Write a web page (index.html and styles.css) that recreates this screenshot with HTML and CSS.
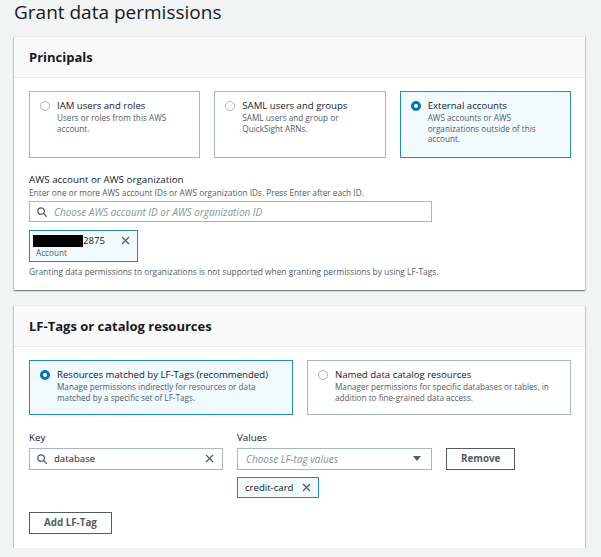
FILE: index.html
```html
<!DOCTYPE html>
<html lang="en">
<head>
<meta charset="utf-8">
<title>Grant data permissions</title>
<link rel="stylesheet" href="styles.css">
</head>
<body>
<div class="page">
  <h1 class="title">Grant data permissions</h1>

  <section class="panel panel-first">
    <header class="panel-head"><h2>Principals</h2></header>
    <div class="panel-body">
      <div class="tiles tiles-3">
        <div class="tile">
          <span class="radio"></span>
          <span class="tile-text">
            <span class="tile-title">IAM users and roles</span>
            <span class="tile-desc">Users or roles from this AWS account.</span>
          </span>
        </div>
        <div class="tile">
          <span class="radio"></span>
          <span class="tile-text">
            <span class="tile-title">SAML users and groups</span>
            <span class="tile-desc">SAML users and group or QuickSight ARNs.</span>
          </span>
        </div>
        <div class="tile selected">
          <span class="radio on"></span>
          <span class="tile-text">
            <span class="tile-title">External accounts</span>
            <span class="tile-desc">AWS accounts or AWS organizations outside of this account.</span>
          </span>
        </div>
      </div>

      <div class="field">
        <div class="field-label">AWS account or AWS organization</div>
        <div class="field-desc">Enter one or more AWS account IDs or AWS organization IDs. Press Enter after each ID.</div>
        <div class="input input-account">
          <svg class="icon" width="10" height="10" viewBox="0 0 10 10"><circle cx="4.1" cy="4.1" r="3.3" fill="none" stroke="#545b64" stroke-width="1.2"/><line x1="6.5" y1="6.5" x2="9.4" y2="9.4" stroke="#545b64" stroke-width="1.3" stroke-linecap="round"/></svg>
          <span class="placeholder">Choose AWS account ID or AWS organization ID</span>
        </div>
        <div class="token token-account">
          <div class="token-row">
            <span class="token-value"><span class="redact"></span>2875</span>
            <svg class="icon" width="9" height="9" viewBox="0 0 9 9"><path d="M1 1L8 8M8 1L1 8" stroke="#545b64" stroke-width="1.2" fill="none"/></svg>
          </div>
          <div class="token-sub">Account</div>
        </div>
        <div class="note">Granting data permissions to organizations is not supported when granting permissions by using LF-Tags.</div>
      </div>
    </div>
  </section>

  <section class="panel panel-second">
    <header class="panel-head"><h2>LF-Tags or catalog resources</h2></header>
    <div class="panel-body">
      <div class="tiles tiles-2">
        <div class="tile selected">
          <span class="radio on"></span>
          <span class="tile-text">
            <span class="tile-title">Resources matched by LF-Tags (recommended)</span>
            <span class="tile-desc">Manage permissions indirectly for resources or data<br>matched by a specific set of LF-Tags.</span>
          </span>
        </div>
        <div class="tile">
          <span class="radio"></span>
          <span class="tile-text">
            <span class="tile-title">Named data catalog resources</span>
            <span class="tile-desc">Manager permissions for specific databases or tables, in<br>addition to fine-grained data access.</span>
          </span>
        </div>
      </div>

      <div class="tag-row">
        <div class="tag-col tag-key">
          <div class="field-label">Key</div>
          <div class="input input-tall">
            <svg class="icon" width="10" height="10" viewBox="0 0 10 10"><circle cx="4.1" cy="4.1" r="3.3" fill="none" stroke="#545b64" stroke-width="1.2"/><line x1="6.5" y1="6.5" x2="9.4" y2="9.4" stroke="#545b64" stroke-width="1.3" stroke-linecap="round"/></svg>
            <span class="value">database</span>
            <svg class="icon" width="9" height="9" viewBox="0 0 9 9"><path d="M1 1L8 8M8 1L1 8" stroke="#545b64" stroke-width="1.2" fill="none"/></svg>
          </div>
        </div>
        <div class="tag-col tag-values">
          <div class="field-label">Values</div>
          <div class="input input-tall input-select">
            <span class="placeholder">Choose LF-tag values</span>
            <svg class="icon" width="8" height="5" viewBox="0 0 8 5"><polygon points="0,0 8,0 4,5" fill="#545b64"/></svg>
          </div>
          <div class="token token-tag">
            <span>credit-card</span>
            <svg class="icon" width="9" height="9" viewBox="0 0 9 9"><path d="M1 1L8 8M8 1L1 8" stroke="#545b64" stroke-width="1.2" fill="none"/></svg>
          </div>
        </div>
        <div class="tag-col tag-action">
          <button class="btn" type="button">Remove</button>
        </div>
      </div>

      <button class="btn btn-add" type="button">Add LF-Tag</button>
    </div>
  </section>
</div>
</body>
</html>
```

FILE: styles.css
```css
html, body {
  margin: 0;
  padding: 0;
}

body {
  background: #f2f3f3;
  font-family: "Open Sans", "Liberation Sans", sans-serif;
  color: #16191f;
}

.page {
  padding: 0 16px 0 14px;
}

.title {
  margin: 0 0 12px 0;
  font-size: 19px;
  font-weight: 400;
  line-height: 24px;
  color: #16191f;
}

.panel {
  background: #fff;
  box-shadow: 0 1px 1px 0 rgba(0, 28, 36, 0.3), 1px 1px 1px 0 rgba(0, 28, 36, 0.15), -1px 1px 1px 0 rgba(0, 28, 36, 0.15);
  border-top: 1px solid #eaeded;
}

.panel-second {
  margin-top: 15px;
}

.panel-head {
  background: #fafafa;
  border-bottom: 1px solid #eaeded;
  padding: 12px 15px 11px;
}

.panel-head h2 {
  margin: 0;
  font-size: 13px;
  font-weight: 700;
  line-height: 17px;
}

.panel-body {
  padding: 13px 14px 14px 15px;
}

.panel-first .panel-body {
  padding-bottom: 13px;
}

.tiles {
  display: grid;
  gap: 14px;
}

.tiles-3 {
  grid-template-columns: repeat(3, 1fr);
}

.tiles-2 {
  grid-template-columns: repeat(2, 1fr);
}

.tile {
  display: flex;
  align-items: flex-start;
  gap: 7px;
  border: 1px solid #aab7b8;
  background: #fff;
  padding: 7px 6px 10px 10px;
}

.tiles-3 .tile {
  padding-bottom: 12px;
}

.tile.selected {
  border-color: #2590a9;
  background: #f1faff;
}

.radio {
  flex: none;
  box-sizing: border-box;
  width: 10px;
  height: 10px;
  margin-top: 2px;
  border: 1px solid #aab7b8;
  border-radius: 50%;
  background: #fff;
}

.radio.on {
  border: 3px solid #0073bb;
}

.tile-text {
  display: block;
  min-width: 0;
}

.tile-title {
  display: block;
  font-size: 9.6px;
  line-height: 14px;
}

.tile-desc {
  display: block;
  font-size: 8.2px;
  line-height: 10.7px;
  color: #545b64;
}

.field {
  margin-top: 15px;
}

.field-label {
  font-size: 9.8px;
  line-height: 14px;
}

.field-desc {
  font-size: 8.3px;
  line-height: 11px;
  color: #545b64;
}

.input {
  box-sizing: border-box;
  display: flex;
  align-items: center;
  gap: 7px;
  height: 21px;
  margin-top: 3px;
  padding: 0 8px 0 7px;
  border: 1px solid #aab7b8;
  background: #fff;
}

.input-account {
  width: 403px;
}

.input-tall {
  height: 22px;
}

.icon {
  flex: none;
  display: block;
}

.placeholder {
  font-size: 10px;
  font-style: italic;
  color: #879596;
}

.value {
  flex: 1;
  font-size: 9.6px;
}

.input-select {
  padding: 0 10px 0 8px;
}

.input-select .placeholder {
  flex: 1;
}

.token {
  box-sizing: border-box;
  border: 1px solid #2590a9;
  background: #f1faff;
}

.token-account {
  display: inline-flex;
  flex-direction: column;
  margin-top: 8px;
  padding: 3px 7px 2px 6px;
}

.token-row {
  display: flex;
  align-items: center;
  gap: 16px;
}

.token-value {
  display: flex;
  align-items: center;
  font-size: 9.6px;
  line-height: 13px;
}

.redact {
  display: inline-block;
  width: 50px;
  height: 12px;
  margin-left: -3px;
  background: #000;
}

.token-sub {
  font-size: 8.2px;
  line-height: 12px;
  color: #545b64;
}

.note {
  margin-top: 4px;
  font-size: 8.35px;
  line-height: 11px;
  color: #545b64;
}

.tag-row {
  display: flex;
  align-items: flex-start;
  gap: 14px;
  margin-top: 16px;
}

.tag-key {
  width: 194px;
}

.tag-values {
  width: 195px;
}

.tag-action {
  padding-top: 17px;
}

.token-tag {
  display: inline-flex;
  align-items: center;
  gap: 9px;
  height: 21px;
  margin-top: 7px;
  padding: 0 7px;
  font-size: 9.6px;
}

.btn {
  box-sizing: border-box;
  display: block;
  height: 22px;
  padding: 0 14px;
  border: 1px solid #545b64;
  border-radius: 0;
  background: #fff;
  font-family: "Open Sans", "Liberation Sans", sans-serif;
  font-size: 9.8px;
  font-weight: 700;
  color: #545b64;
}

.btn-add {
  margin-top: 14px;
}
```
